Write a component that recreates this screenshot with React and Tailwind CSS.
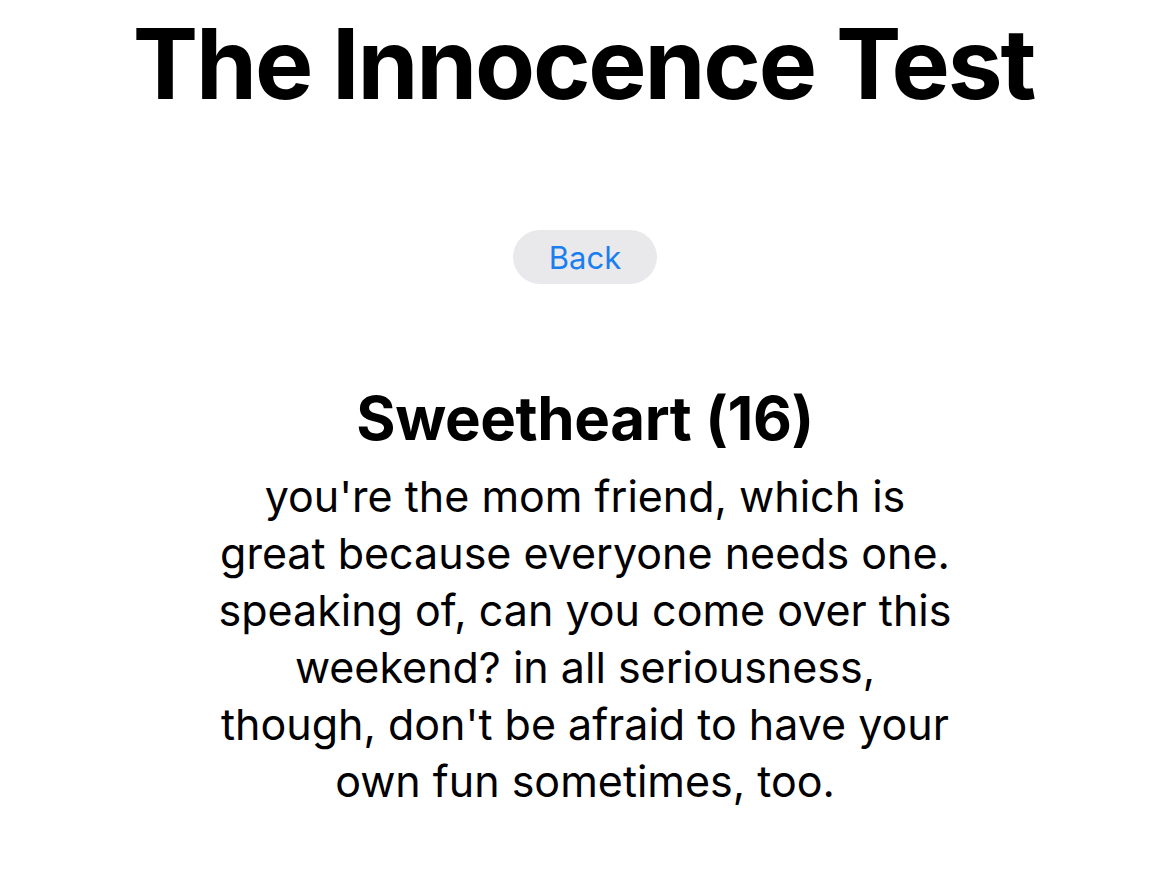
export default function App() {
  return (
    <div className="min-h-[878px] w-full bg-white flex flex-col items-center text-black" style={{ fontFamily: "Inter, 'Noto Sans', sans-serif" }}>
      <h1 className="mt-[15px] -ml-[3px] text-[98px] leading-none font-bold tracking-[-2.2px] whitespace-nowrap">
        The Innocence Test
      </h1>
      <button className="mt-[117px] h-[54px] w-[144px] rounded-full bg-[#e9e9eb] text-[31px] leading-none text-[#1a7ef0] flex items-center justify-center">
        Back
      </button>
      <h2 className="mt-[104px] text-[60px] leading-none font-bold tracking-[-0.4px] whitespace-nowrap">
        Sweetheart (16)
      </h2>
      <p className="mt-[20px] w-[800px] text-center text-[43px] leading-[57px]">
        you're the mom friend, which is
        <br />
        great because everyone needs one.
        <br />
        speaking of, can you come over this
        <br />
        weekend? in all seriousness,
        <br />
        though, don't be afraid to have your
        <br />
        own fun sometimes, too.
      </p>
    </div>
  );
}
